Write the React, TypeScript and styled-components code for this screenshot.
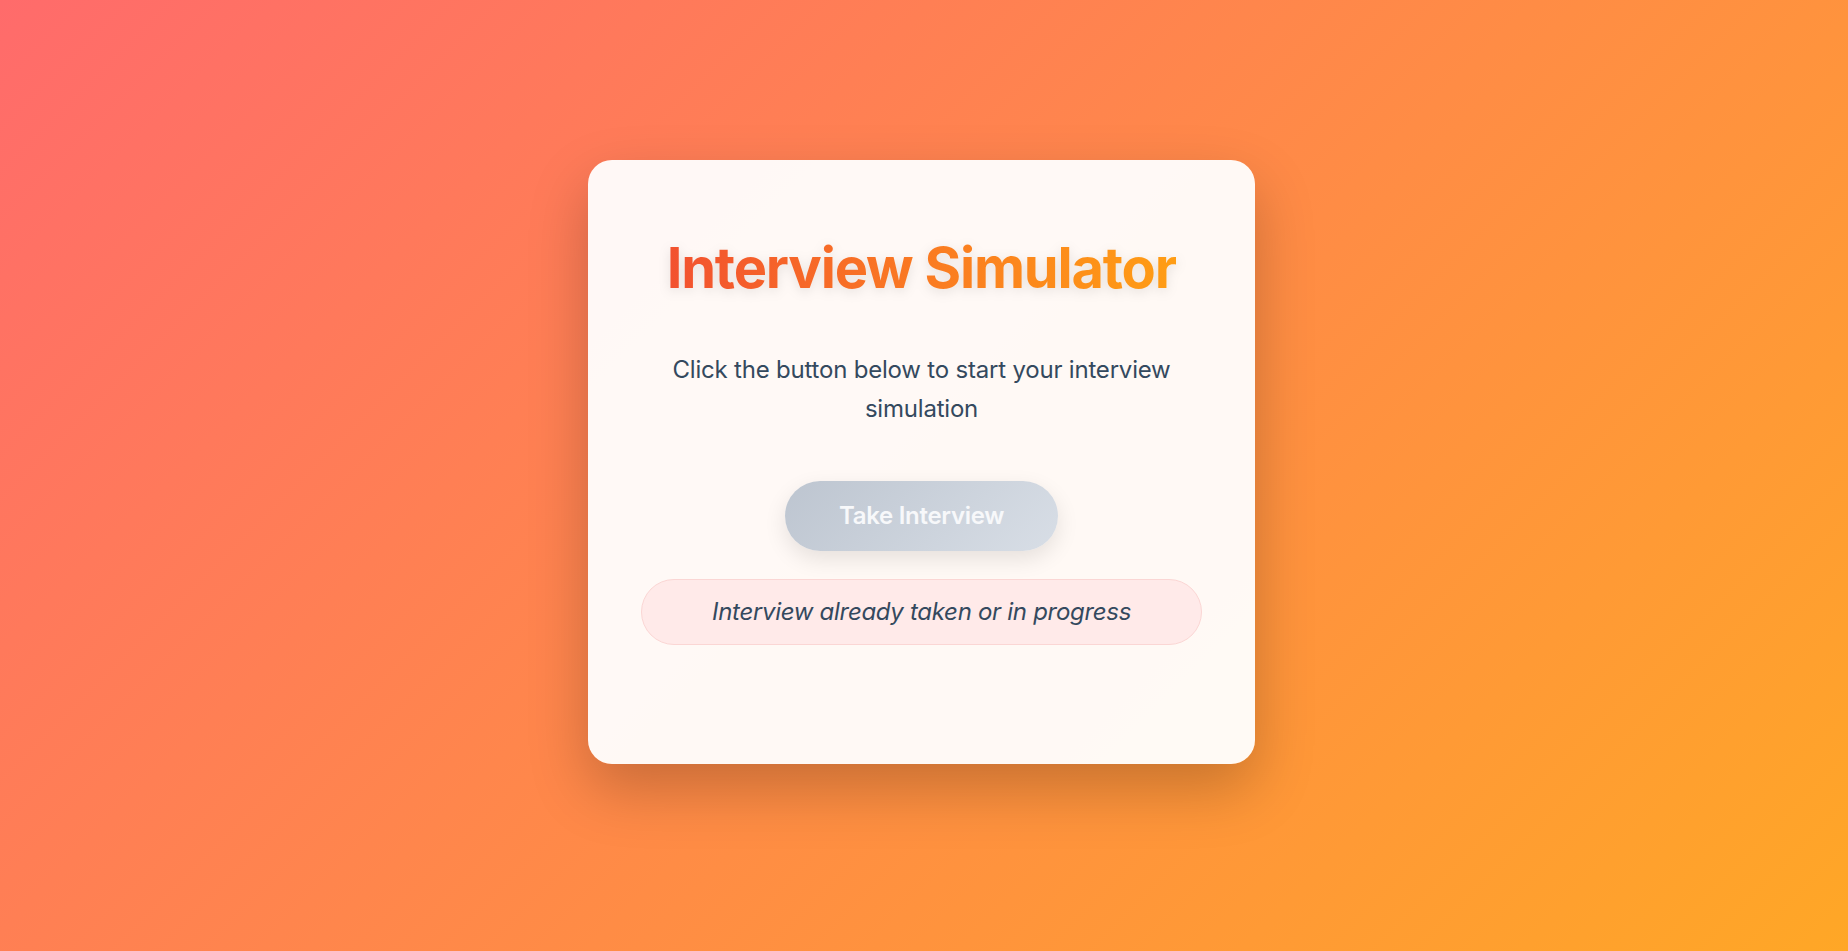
import React from 'react';
import styled, { createGlobalStyle } from 'styled-components';

const GlobalStyle = createGlobalStyle`
  html, body {
    margin: 0;
    padding: 0;
  }

  body {
    font-family: Inter, 'Noto Sans', sans-serif;
    background: linear-gradient(135deg, #ff6b6b 0%, #ffa726 100%);
    min-height: 100vh;
  }
`;

const Page = styled.main`
  min-height: 100vh;
  box-sizing: border-box;
  display: flex;
  flex-direction: column;
  align-items: center;
  padding: 160px 5px 0 0;
`;

const Card = styled.section`
  width: 667px;
  box-sizing: border-box;
  padding: 75px 53px 119px;
  border-radius: 24px;
  background: rgba(255, 255, 255, 0.95);
  box-shadow: 0 25px 60px rgba(0, 0, 0, 0.22);
  display: flex;
  flex-direction: column;
  align-items: center;
  text-align: center;
`;

const Title = styled.h1`
  margin: 0;
  font-size: 56px;
  font-weight: 700;
  line-height: 1.2;
  letter-spacing: -1.2px;
  background: linear-gradient(90deg, #f2512f 0%, #fa7a22 50%, #ff9d14 100%);
  -webkit-background-clip: text;
  background-clip: text;
  -webkit-text-fill-color: transparent;
  filter: drop-shadow(0 3px 6px rgba(0, 0, 0, 0.1));
`;

const Lead = styled.p`
  margin: 49px 0 0;
  font-size: 24px;
  line-height: 1.6;
  letter-spacing: -0.2px;
  color: #34495e;
  max-width: 520px;
`;

const StartButton = styled.button<{ disabled?: boolean }>`
  margin-top: 53px;
  height: 70px;
  padding: 0 54px;
  border: none;
  border-radius: 35px;
  font-family: inherit;
  font-size: 24px;
  font-weight: 600;
  letter-spacing: -0.3px;
  color: #f7f8fa;
  background: ${({ disabled }) =>
    disabled
      ? 'linear-gradient(135deg, #bdc5d0 0%, #d8dee6 100%)'
      : 'linear-gradient(135deg, #ff6b6b 0%, #ffa726 100%)'};
  box-shadow: 0 8px 22px rgba(0, 0, 0, 0.1);
  cursor: ${({ disabled }) => (disabled ? 'not-allowed' : 'pointer')};
`;

const Status = styled.div`
  margin-top: 28px;
  width: 100%;
  height: 66px;
  box-sizing: border-box;
  display: flex;
  align-items: center;
  justify-content: center;
  border: 1px solid #fbd6d4;
  border-radius: 33px;
  background: #ffeae9;
  font-size: 24px;
  font-style: italic;
  letter-spacing: -0.3px;
  color: #34495e;
`;

const App: React.FC = () => {
  const alreadyTaken = true;

  return (
    <>
      <GlobalStyle />
      <Page>
        <Card>
          <Title>Interview Simulator</Title>
          <Lead>Click the button below to start your interview simulation</Lead>
          <StartButton disabled={alreadyTaken}>Take Interview</StartButton>
          {alreadyTaken && (
            <Status>Interview already taken or in progress</Status>
          )}
        </Card>
      </Page>
    </>
  );
};

export default App;
